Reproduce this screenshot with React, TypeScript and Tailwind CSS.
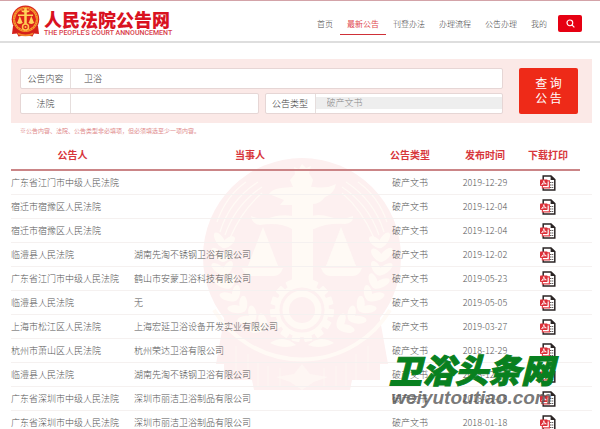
const navItems = ['首页', '最新公告', '刊登办法', '办理流程', '公告办理', '我的'];

const notices = [
  { court: '广东省江门市中级人民法院', party: '', date: '2019-12-29' },
  { court: '宿迁市宿豫区人民法院', party: '', date: '2019-12-04' },
  { court: '宿迁市宿豫区人民法院', party: '', date: '2019-12-04' },
  { court: '临澧县人民法院', party: '湖南先淘不锈钢卫浴有限公司', date: '2019-12-02' },
  { court: '广东省江门市中级人民法院', party: '鹤山市安蒙卫浴科技有限公司', date: '2019-05-23' },
  { court: '临澧县人民法院', party: '无', date: '2019-05-05' },
  { court: '上海市松江区人民法院', party: '上海宏延卫浴设备开发实业有限公司', date: '2019-03-27' },
  { court: '杭州市萧山区人民法院', party: '杭州荣达卫浴有限公司', date: '2018-12-29' },
  { court: '临澧县人民法院', party: '湖南先淘不锈钢卫浴有限公司', date: '2018-12-18' },
  { court: '广东省深圳市中级人民法院', party: '深圳市丽洁卫浴制品有限公司', date: '2018-01-18' },
  { court: '广东省深圳市中级人民法院', party: '深圳市丽洁卫浴制品有限公司', date: '2018-01-18' },
];

const leaves = [188, 178, 168, 158, 148, 138, 128, 118];
const teeth = [0, 24, 48, 72, 96, 120, 144, 168, 192, 216, 240, 264, 288, 312, 336];

const LogoEmblem = () => (
  <svg viewBox="0 0 58 64" className="w-[29px] h-8" aria-hidden="true">
    <path d="M4 42 L2 58 L12 57 L15 63 L29 60 L43 63 L46 57 L56 58 L54 42 Z" fill="#d3201b" />
    <path d="M13 55 Q29 63 45 55 L43 60 Q29 65 15 60 Z" fill="#f0832a" />
    <circle cx="29" cy="28.5" r="27.5" fill="#d9241c" />
    <circle cx="29" cy="28.5" r="23" fill="none" stroke="#f59a2e" strokeWidth="4.5" />
    <circle cx="29" cy="28.5" r="23" fill="none" stroke="#d9301c" strokeWidth="1.4" strokeDasharray="2 3" />
    <circle cx="29" cy="28.5" r="20" fill="#dc231b" />
    <g fill="#ffd35a">
      <path d="M27 6 H31 L32 11 H38 Q37 15 31.5 15 V19 H44 V22 H31.5 V42 H26.5 V22 H14 V19 H26.5 V15 Q21 15 20 11 H26 Z" />
      <path d="M17.5 22 L22.5 34 H24 Q22 38 17.5 38 T11.5 34 H13 Z" />
      <path d="M40.5 22 L45.5 34 H47 Q45 38 40.5 38 T34.5 34 H36 Z" />
    </g>
    <circle cx="29" cy="44" r="6" fill="#d9241c" stroke="#ffc64a" strokeWidth="3" />
    <circle cx="29" cy="44" r="2" fill="#ffc64a" />
  </svg>
);

const WatermarkEmblem = () => (
  <svg
    viewBox="0 0 200 232"
    className="absolute top-[19px] left-1/2 -translate-x-1/2 w-[200px] h-[232px] text-[#fffaf5]"
    aria-hidden="true"
  >
    <path d="M24 150 L176 150 L186 206 L178 206 L178 222 L150 222 L148 232 L52 232 L50 222 L22 222 L22 206 L14 206 Z" fill="#fdf0f0" />
    <path
      d="M34 188V214M46 196V222M56 204V228M66 208V228M78 210V228M122 210V228M134 208V228M144 204V228M154 196V222M166 188V214"
      stroke="currentColor"
      opacity="0.6"
    />
    <path d="M100 206 L108 216 L126 219 L112 224 L100 232 L88 224 L74 219 L92 216 Z" fill="currentColor" opacity="0.6" />
    <circle cx="100" cy="99" r="99" fill="#fdf0f0" />
    <path d="M12 152 A103 103 0 0 0 188 152" fill="none" stroke="currentColor" strokeWidth="4" />
    {['', 'translate(200 0) scale(-1 1)'].map((side) => (
      <g key={side} transform={side} fill="currentColor">
        <path
          d="M18 74 Q28 42 56 24M23 77 Q34 46 60 29M28 80 Q40 52 60 35M15 64 Q24 38 44 24"
          fill="none"
          stroke="currentColor"
          strokeWidth="1.2"
        />
        {leaves.map((a) => (
          <g key={a} transform={`translate(100 99) rotate(${a}) translate(79 0)`}>
            <ellipse cx="7" cy="0" rx="9" ry="4" transform="rotate(48)" />
            <ellipse cx="-6" cy="0" rx="8" ry="4" transform="rotate(-48)" />
          </g>
        ))}
        <path d="M94 187 Q82 176 68 185 Q82 192 94 187" />
        <path d="M61 69 L76 108 H46 Z" />
        <path d="M40 110 H81 Q78 118 72 118 H49 Q43 118 40 110" />
      </g>
    ))}
    <g fill="currentColor">
      <path d="M92 9 L97 11 L100 6 L104 10 L109 8 L107 15 L111 22 L109 29 H91 L88 22 L93 16 Z" />
      <path d="M90 29 H112 Q125 31 134 26 Q132 36 123 39 Q118 46 111 46 V126 H90 V47 H78 L82 42 L67 36 Q70 31 79 30 Z" />
      <path d="M49 58 Q60 63 74 58 Q86 56 94 59 H107 Q116 55 128 59 Q140 63 151 58 Q152 65 143 66 Q124 65 112 71 L90 71 Q78 64 58 67 Q50 66 49 58" />
      {teeth.map((a) => (
        <rect key={a} x="96" y="120" width="8" height="9" rx="1" transform={`rotate(${a} 100 152)`} />
      ))}
      <circle cx="100" cy="152" r="27" />
    </g>
    <circle cx="100" cy="152" r="21" fill="none" stroke="#fdf0f0" strokeWidth="3" />
    <circle cx="100" cy="152" r="13" fill="#fdf0f0" />
  </svg>
);

const PdfIcon = () => (
  <svg viewBox="0 0 16 16" className="w-4 h-4" aria-hidden="true">
    <path d="M3.2 0.9 H11 L14.8 4.6 V15.1 H3.2 Z" fill="#fff" stroke="#2b2525" strokeWidth="1.5" />
    <path d="M10.6 0.5 L15.2 5 H10.6 Z" fill="#2b2525" />
    <path d="M10.2 7.5H11.4M12.2 7.5H13.2M10.2 10H11.4M12.2 10H13.2M10.2 12.5H11.4M12.2 12.5H13.2" stroke="#3b3333" strokeWidth="1.1" />
    <path d="M2.4 5.8 H9.4 V12.8 H2.4 Z" fill="#fff" stroke="#e2434a" strokeWidth="1.2" />
    <rect x="0" y="4.4" width="7.6" height="6.6" rx="0.8" fill="#dc2f38" />
    <path d="M1.6 9.6 Q3.9 7.6 3.8 5.6 Q4.1 8.2 6.3 8.8 Q4 8.2 1.6 9.6" fill="none" stroke="#fff" strokeWidth="0.8" />
  </svg>
);

const navLinkClass = 'px-[7px] pt-[11px] h-7 leading-3 whitespace-nowrap';

const Header = () => (
  <header className="flex items-center h-[43px] pl-[11px] pr-[18px] border-t border-t-[#d3a3a8] border-b-2 border-b-[#dedede]">
    <a href="/" className="flex items-center gap-1">
      <LogoEmblem />
      <span className="flex flex-col pt-1">
        <span className="text-[18px] leading-5 font-black text-[#d9121f]">人民法院公告网</span>
        <span className="text-[7px] leading-2 font-medium text-[#d8404a] font-['Roboto',sans-serif] whitespace-nowrap">
          THE PEOPLE'S COURT ANNOUNCEMENT
        </span>
      </span>
    </a>
    <nav className="flex items-center ml-auto text-[8px]">
      {navItems.map((item) => (
        <a
          key={item}
          href="#"
          className={
            item === '最新公告'
              ? `${navLinkClass} text-[#e0474d] shadow-[inset_0_-1px_0_#cf3037]`
              : `${navLinkClass} font-light text-[#444]`
          }
        >
          {item}
        </a>
      ))}
    </nav>
    <button type="button" aria-label="搜索" className="flex items-center justify-center w-6 h-[17px] ml-1 mt-1 rounded-xs bg-[#e60012]">
      <svg viewBox="0 0 10 10" className="w-[9px] h-[9px]" fill="none" stroke="#fff" strokeWidth="1.3" aria-hidden="true">
        <circle cx="4.3" cy="4.3" r="3.2" />
        <path d="M6.6 6.6 L9.3 9.3" />
      </svg>
    </button>
  </header>
);

const fieldClass = 'flex items-stretch h-[21px] bg-white border border-[#e6d6d5] rounded-xs';
const labelClass = 'flex items-center justify-center w-[50px] shrink-0 border-r border-[#e6dedd]';

const SearchPanel = () => (
  <form className="flex gap-4 py-[9px] pl-[9px] pr-[14px] bg-[#fbe9e7] text-[9px] font-light text-[#444]">
    <div className="flex-1 flex flex-col gap-1">
      <div className={fieldClass}>
        <label htmlFor="content" className={labelClass}>公告内容</label>
        <input id="content" type="text" defaultValue="卫浴" className="flex-1 min-w-0 px-[13px] outline-none" />
      </div>
      <div className="flex gap-[6px]">
        <div className={`${fieldClass} flex-1`}>
          <label htmlFor="court" className={labelClass}>法院</label>
          <input id="court" type="text" className="flex-1 min-w-0 px-[13px] outline-none" />
        </div>
        <div className={`${fieldClass} flex-1`}>
          <label htmlFor="type" className={labelClass}>公告类型</label>
          <select id="type" disabled className="flex-1 min-w-0 h-3 mt-[3px] px-[11px] leading-3 appearance-none bg-[#eee] text-[#888] opacity-100">
            <option>破产文书</option>
          </select>
        </div>
      </div>
    </div>
    <button type="button" className="w-[59px] pb-[2px] rounded-xs bg-[#ee2a18] text-white text-[12px] leading-[15px] font-normal">
      查 询
      <br />
      公 告
    </button>
  </form>
);

const thClass = 'h-8 border-b-2 border-[#cb8587] text-center font-bold';

const NoticeTable = () => (
  <div className="relative">
    <WatermarkEmblem />
    <table className="relative w-full table-fixed border-separate border-spacing-0 text-[9px] text-[#555]">
      <colgroup>
        <col className="w-[123px]" />
        <col />
        <col className="w-[88px]" />
        <col className="w-[62px]" />
        <col className="w-[64px]" />
        <col className="w-3" />
      </colgroup>
      <thead className="text-[10px] text-[#d7363b]">
        <tr>
          <th className={thClass}>公告人</th>
          <th className={thClass}>当事人</th>
          <th className={thClass}>公告类型</th>
          <th className={thClass}>发布时间</th>
          <th className={thClass}>下载打印</th>
          <td />
        </tr>
      </thead>
      <tbody className="font-light">
        {notices.map((notice, i) => (
          <tr key={i} className="h-6 leading-4 whitespace-nowrap *:border-b *:border-[#f5f1f0]">
            <td>{notice.court}</td>
            <td>{notice.party}</td>
            <td className="text-center">破产文书</td>
            <td className="text-center">{notice.date}</td>
            <td>
              <a href="#" aria-label="下载" className="flex justify-center">
                <PdfIcon />
              </a>
            </td>
            <td />
          </tr>
        ))}
      </tbody>
    </table>
  </div>
);

export default function App() {
  return (
    <div className="relative h-screen overflow-hidden bg-white font-['Noto_Sans_CJK_SC',sans-serif]">
      <Header />
      <main className="pt-4 pl-[11px] pr-2">
        <SearchPanel />
        <p className="h-4 pl-[9px] text-[6px] leading-4 text-[#e08a8c]">
          ※公告内容、法院、公告类型非必填项，但必须填选至少一项内容。
        </p>
        <NoticeTable />
      </main>
      <div className="absolute right-[46px] bottom-[21px] flex flex-col items-center italic whitespace-nowrap">
        <span className="text-[33px] leading-[38px] font-black text-[#08801f] [-webkit-text-stroke:1px_#08801f]">
          卫浴头条网
        </span>
        <span className="text-[19px] leading-5 font-bold text-[#555]/80 font-['Liberation_Sans',sans-serif]">
          weiyutoutiao.com
        </span>
      </div>
    </div>
  );
}
